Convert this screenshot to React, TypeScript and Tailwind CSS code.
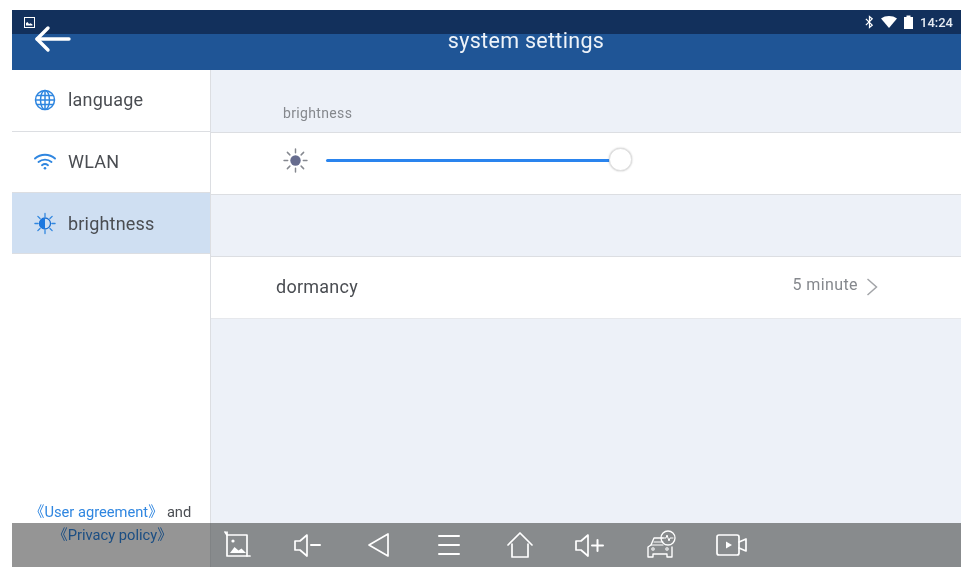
import React from 'react';

const font = { fontFamily: 'Roboto, "Noto Sans CJK SC", sans-serif' };

const NavIcon: React.FC<{ children: React.ReactNode }> = ({ children }) => (
  <svg viewBox="0 0 32 32" className="w-[32px] h-[32px]" fill="none" stroke="#fff" strokeWidth="1.7" strokeLinecap="round" strokeLinejoin="round">
    {children}
  </svg>
);

const SunRays: React.FC<{ color: string }> = ({ color }) => (
  <g stroke={color} strokeWidth="1.4" strokeLinecap="round">
    <path d="M12 1v3.5M12 19.5V23M1 12h3.5M19.5 12H23M4.2 4.2l2.4 2.4M17.4 17.4l2.4 2.4M4.2 19.8l2.4-2.4M17.4 6.6l2.4-2.4" />
  </g>
);

const SideRow: React.FC<{ label: string; icon: React.ReactNode; active?: boolean; height: string }> = ({ label, icon, active, height }) => (
  <div className={`${height} flex items-center pl-[22px] border-b border-[#dcdee2] ${active ? 'bg-[#cfdff2]' : 'bg-white pb-[2px]'}`}>
    <div className="w-[22px] h-[22px] flex items-center justify-center">{icon}</div>
    <span className="ml-[12px] text-[18px] text-[#4a4d52] tracking-[0.2px]">{label}</span>
  </div>
);

export default function App() {
  return (
    <div className="w-[971px] h-[573px] bg-white pt-[10px] pb-[6px] px-[12px] overflow-hidden" style={font}>
      <div className="relative w-[949px] h-[557px] flex flex-col bg-[#edf1f8]">
        {/* status bar */}
        <div className="h-[24px] bg-[#12305c] flex items-center justify-between pl-[12px] pr-[8px] shrink-0">
          <svg viewBox="0 0 11 11" className="w-[11px] h-[11px]">
            <rect x="0.5" y="0.5" width="10" height="10" fill="none" stroke="#fff" strokeWidth="1" />
            <path d="M2 8.5V6l1.5-1 1.5 2 1.5-.8 2 1.2v1z" fill="#fff" />
          </svg>
          <div className="flex items-center">
            <svg viewBox="0 0 10 14" className="w-[9px] h-[14px]" fill="none" stroke="#fff" strokeWidth="1.4">
              <path d="M1 3.5l7 7L5 13V1l3 2.5-7 7" />
            </svg>
            <svg viewBox="0 0 16 12" className="w-[16px] h-[12px] ml-[7px]">
              <path d="M0 2.500C4.500-.8 11.500-.8 16 2.500L8 12z" fill="#fff" />
            </svg>
            <svg viewBox="0 0 9 14" className="w-[9px] h-[14px] ml-[7px]">
              <path d="M0 2h2.500V.5h4V2H9v12H0z" fill="#fff" />
            </svg>
            <span className="ml-[7px] text-[13px] text-[#e6ebf2] font-medium leading-none">14:24</span>
          </div>
        </div>

        {/* header */}
        <div className="h-[36px] bg-[#1f5596] flex items-start justify-center pl-[79px] shrink-0">
          <span className="text-[21.5px] leading-[14px] text-[#eef3f9] tracking-[0.3px]">system settings</span>
        </div>
        <svg viewBox="0 0 38 28" className="absolute left-[22px] top-[15px] w-[38px] h-[28px]" fill="none" stroke="#fff" strokeWidth="3.4" strokeLinecap="round" strokeLinejoin="round">
          <path d="M35 14H3" />
          <path d="M14 3L3 14l11 11" />
        </svg>

        <div className="flex flex-1 min-h-0">
          {/* sidebar */}
          <div className="w-[199px] shrink-0 bg-white border-r border-[#dcdee2] flex flex-col">
            <SideRow
              height="h-[62px]"
              label="language"
              icon={
                <svg viewBox="0 0 22 22" className="w-[22px] h-[22px]" fill="none" stroke="#2f86e0" strokeWidth="1.5">
                  <circle cx="11" cy="11" r="9.500" />
                  <ellipse cx="11" cy="11" rx="4.500" ry="9.500" />
                  <path d="M11 1.500v19M1.500 11h19M3 6.500h16M3 15.500h16" />
                </svg>
              }
            />
            <SideRow
              height="h-[61px]"
              label="WLAN"
              icon={
                <svg viewBox="0 0 22 18" className="w-[22px] h-[18px]" fill="none" stroke="#2f86e0" strokeWidth="1.9" strokeLinecap="round">
                  <path d="M1 6.500c5.600-5 14.400-5 20 0" />
                  <path d="M4.500 10c3.700-3.200 9.300-3.200 13 0" />
                  <path d="M8 13.200c1.800-1.400 4.200-1.400 6 0" />
                  <circle cx="11" cy="16.200" r="1.300" fill="#2f86e0" stroke="none" />
                </svg>
              }
            />
            <SideRow
              active
              height="h-[61px]"
              label="brightness"
              icon={
                <svg viewBox="0 0 24 24" className="w-[23px] h-[23px]" fill="none">
                  <SunRays color="#2f86e0" />
                  <circle cx="12" cy="12" r="6" stroke="#1c6fd0" strokeWidth="1.4" />
                  <path d="M12 6a6 6 0 0 0 0 12z" fill="#1c78e0" />
                </svg>
              }
            />
            <div className="mt-auto mb-[20px] text-[14.7px] leading-[23px] text-center">
              <div className="pr-[1px]">
                <span className="text-[#2f86e0]">《User agreement》</span>
                <span className="text-[#4a4d52] ml-[4px]">and</span>
              </div>
              <div className="text-[#2f86e0] pl-[3px]">《Privacy policy》</div>
            </div>
          </div>

          {/* content */}
          <div className="flex-1 min-w-0 flex flex-col">
            <div className="h-[63px] flex items-end pl-[72px] pb-[11px] border-b border-[#dcdee2] shrink-0">
              <span className="text-[14px] leading-[16px] text-[#85888d] tracking-[0.35px]">brightness</span>
            </div>
            <div className="h-[62px] bg-white flex items-center pl-[72px] pb-[7px] border-b border-[#dcdee2] shrink-0">
              <svg viewBox="0 0 24 24" className="w-[25px] h-[25px] shrink-0" fill="none">
                <SunRays color="#85888f" />
                <circle cx="12" cy="12" r="5" fill="#666c8e" />
              </svg>
              <div className="relative ml-[18px] w-[284px] h-[3px] rounded-full bg-[#2a84ee]">
                <div className="absolute left-[283px] top-[-11px] w-[23px] h-[23px] rounded-full bg-white border border-[#e0e0e0] shadow-[0_0_2px_rgba(0,0,0,0.25)]" />
              </div>
            </div>
            <div className="h-[62px] border-b border-[#dcdee2] shrink-0" />
            <div className="h-[62px] bg-white flex items-center pl-[65px] pr-[83px] pb-[2px] border-b border-[#e6e8ec] shrink-0">
              <span className="text-[18px] text-[#4a4d52] tracking-[0.25px]">dormancy</span>
              <span className="ml-auto text-[16px] text-[#85888d] tracking-[0.4px] -mt-[3px]">5 minute</span>
              <svg viewBox="0 0 12 18" className="ml-[8px] w-[12px] h-[18px]" fill="none" stroke="#a2a4a8" strokeWidth="1.5">
                <path d="M1.500 1l9 8-9 8" />
              </svg>
            </div>
          </div>
        </div>

        {/* nav bar overlay */}
        <div className="absolute left-0 bottom-0 w-full h-[44px] flex">
          <div className="w-[198px] h-full bg-[#959595] mix-blend-multiply shrink-0" />
          <div className="flex-1 bg-[#888b8d] border-l border-[#808385] flex items-center pl-[9px] gap-[38.7px]">
            <NavIcon>
              <path d="M5 3l2 3h20v21" />
              <path d="M7 3v24h23" />
              <path d="M10 24l4.500-6 4 3.500 3-2 4.500 4.500z" fill="#fff" stroke="none" />
              <circle cx="13" cy="12" r="1.600" fill="#fff" stroke="none" />
            </NavIcon>
            <NavIcon>
              <path d="M4 12v9h5l7 6V6l-7 6z" />
              <path d="M20 16h9" strokeWidth="2" />
            </NavIcon>
            <NavIcon>
              <path d="M27 5v22L8 16z" />
            </NavIcon>
            <NavIcon>
              <path d="M7 7h20M7 16h20M7 25h20" strokeWidth="2" />
            </NavIcon>
            <NavIcon>
              <path d="M5 16L17 4l12 12" />
              <path d="M9 15v13h16V15" />
            </NavIcon>
            <NavIcon>
              <path d="M3 12v9h5l7 6V6l-7 6z" />
              <path d="M19 16.500h11M24.500 11v11" strokeWidth="2" />
            </NavIcon>
            <NavIcon>
              <path d="M19 9H10l-3 7-3 2v10h5v-3h14v3h5V18" strokeWidth="1.400" />
              <path d="M10 13h9M7 16h12" strokeWidth="1.200" />
              <circle cx="9" cy="20" r="1.200" strokeWidth="1.100" />
              <circle cx="23" cy="20" r="1.200" strokeWidth="1.100" />
              <circle cx="24" cy="9" r="7" strokeWidth="1.300" />
              <path d="M19 9h3l1-3 2 6 1-3h3" strokeWidth="1" />
            </NavIcon>
            <NavIcon>
              <rect x="2" y="6" width="22" height="20" rx="2" />
              <path d="M11 12.500v7l6-3.500z" fill="#fff" stroke="none" />
              <path d="M24 13l7-3v12l-7-3" />
            </NavIcon>
          </div>
        </div>
      </div>
    </div>
  );
}
